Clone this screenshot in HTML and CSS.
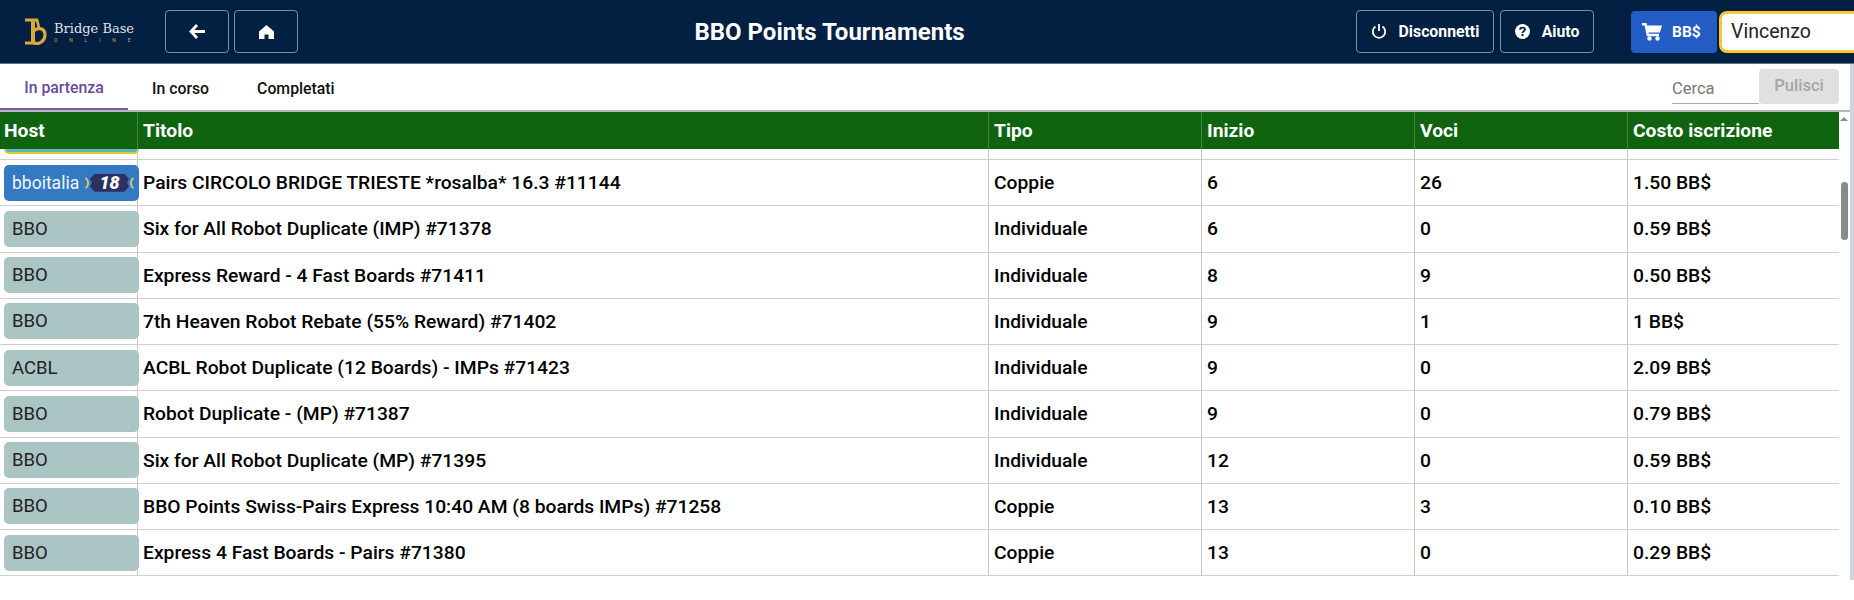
FILE: index.html
```html
<!DOCTYPE html>
<html>
<head>
    <meta charset="UTF-8">
    <title>BBO Points Tournaments</title>
    <link rel="stylesheet" href="styles.css">
</head>
<body>
    <header class="topbar">
        <div class="logo">
            <svg class="logo-mark" width="22" height="27" viewBox="0 0 22 27">
                <path d="M0 2H12L14 10M0 25H11" fill="none" stroke="#d9a93a" stroke-width="2.8"/>
                <path d="M8 2V25" fill="none" stroke="#d9a93a" stroke-width="4"/>
                <path d="M8 14C11 9 20 9 20 17C20 23 14 27 9 25" fill="none" stroke="#d9a93a" stroke-width="3.2"/>
            </svg>
            <div class="logo-text">
                <span class="logo-name">Bridge Base</span>
                <span class="logo-sub">ONLINE</span>
            </div>
        </div>
        <button class="btn btn-icon">
            <svg width="16" height="15" viewBox="0 0 16 15"><path d="M8 1L2 7.5L8 14M2.5 7.5H16" fill="none" stroke="#fff" stroke-width="2.8"/></svg>
        </button>
        <button class="btn btn-icon">
            <svg width="15" height="14" viewBox="0 0 15 14"><path d="M7.5 0L0 6.5V14H5.5V9.5H9.5V14H15V6.5Z" fill="#fff"/></svg>
        </button>
        <h1 class="title">BBO Points Tournaments</h1>
        <button class="btn btn-text btn-logout">
            <svg width="16" height="17" viewBox="0 0 16 17"><path d="M8 1V8M4.5 3.5A6.2 6.2 0 1 0 11.5 3.5" fill="none" stroke="#fff" stroke-width="1.8"/></svg>
            Disconnetti
        </button>
        <button class="btn btn-text btn-help">
            <svg width="15" height="15" viewBox="0 0 15 15"><circle cx="7.5" cy="7.5" r="7.5" fill="#fff"/><path d="M5 5.8C5 2.9 10 2.9 10 5.6C10 7.4 7.5 7.2 7.5 9" fill="none" stroke="#031f42" stroke-width="1.8"/><rect x="6.5" y="10" width="2" height="2" fill="#031f42"/></svg>
            Aiuto
        </button>
        <button class="btn-buy">
            <svg width="20" height="18" viewBox="0 0 20 18"><path d="M0 1.2H3.6L5.8 12H17" fill="none" stroke="#fff" stroke-width="2.4"/><path d="M4.5 2.5H20L18 9.5H6Z" fill="#fff"/><circle cx="7.5" cy="15.5" r="2.2" fill="#fff"/><circle cx="15.5" cy="15.5" r="2.2" fill="#fff"/></svg>
            BB$
        </button>
        <div class="user-box">Vincenzo</div>
    </header>

    <div class="main">
        <div class="content">
            <nav class="tabs">
                <a class="tab active">In partenza</a>
                <a class="tab">In corso</a>
                <a class="tab">Completati</a>
                <div class="search">
                    <span class="search-input">Cerca</span>
                    <span class="clear-btn">Pulisci</span>
                </div>
            </nav>
            <div class="table-area">
                <div class="table">
                    <div class="row head">
                        <div class="cell">Host</div>
                        <div class="cell">Titolo</div>
                        <div class="cell">Tipo</div>
                        <div class="cell">Inizio</div>
                        <div class="cell">Voci</div>
                        <div class="cell">Costo iscrizione</div>
                    </div>
                    <div class="row cut">
                        <div class="cell"><span class="host-cut"></span></div>
                        <div class="cell"></div>
                        <div class="cell"></div>
                        <div class="cell"></div>
                        <div class="cell"></div>
                        <div class="cell"></div>
                    </div>
                    <div class="row">
                        <div class="cell"><span class="host blue">bboitalia
                            <span class="badge">
                                <svg width="4" height="12" viewBox="0 0 4 12"><path d="M0.5 1C4 3 4 9 0.5 11" fill="none" stroke="#e6c766" stroke-width="1.8"/></svg>
                                <span class="badge-num">18</span>
                                <svg width="4" height="12" viewBox="0 0 4 12"><path d="M3.5 1C0 3 0 9 3.5 11" fill="none" stroke="#e6c766" stroke-width="1.8"/></svg>
                            </span>
                        </span></div>
                        <div class="cell">Pairs CIRCOLO BRIDGE TRIESTE *rosalba* 16.3 #11144</div>
                        <div class="cell">Coppie</div>
                        <div class="cell">6</div>
                        <div class="cell">26</div>
                        <div class="cell">1.50 BB$</div>
                    </div>
                    <div class="row">
                        <div class="cell"><span class="host">BBO</span></div>
                        <div class="cell">Six for All Robot Duplicate (IMP) #71378</div>
                        <div class="cell">Individuale</div>
                        <div class="cell">6</div>
                        <div class="cell">0</div>
                        <div class="cell">0.59 BB$</div>
                    </div>
                    <div class="row">
                        <div class="cell"><span class="host">BBO</span></div>
                        <div class="cell">Express Reward - 4 Fast Boards #71411</div>
                        <div class="cell">Individuale</div>
                        <div class="cell">8</div>
                        <div class="cell">9</div>
                        <div class="cell">0.50 BB$</div>
                    </div>
                    <div class="row">
                        <div class="cell"><span class="host">BBO</span></div>
                        <div class="cell">7th Heaven Robot Rebate (55% Reward) #71402</div>
                        <div class="cell">Individuale</div>
                        <div class="cell">9</div>
                        <div class="cell">1</div>
                        <div class="cell">1 BB$</div>
                    </div>
                    <div class="row">
                        <div class="cell"><span class="host">ACBL</span></div>
                        <div class="cell">ACBL Robot Duplicate (12 Boards) - IMPs #71423</div>
                        <div class="cell">Individuale</div>
                        <div class="cell">9</div>
                        <div class="cell">0</div>
                        <div class="cell">2.09 BB$</div>
                    </div>
                    <div class="row">
                        <div class="cell"><span class="host">BBO</span></div>
                        <div class="cell">Robot Duplicate - (MP) #71387</div>
                        <div class="cell">Individuale</div>
                        <div class="cell">9</div>
                        <div class="cell">0</div>
                        <div class="cell">0.79 BB$</div>
                    </div>
                    <div class="row">
                        <div class="cell"><span class="host">BBO</span></div>
                        <div class="cell">Six for All Robot Duplicate (MP) #71395</div>
                        <div class="cell">Individuale</div>
                        <div class="cell">12</div>
                        <div class="cell">0</div>
                        <div class="cell">0.59 BB$</div>
                    </div>
                    <div class="row">
                        <div class="cell"><span class="host">BBO</span></div>
                        <div class="cell">BBO Points Swiss-Pairs Express 10:40 AM (8 boards IMPs) #71258</div>
                        <div class="cell">Coppie</div>
                        <div class="cell">13</div>
                        <div class="cell">3</div>
                        <div class="cell">0.10 BB$</div>
                    </div>
                    <div class="row">
                        <div class="cell"><span class="host">BBO</span></div>
                        <div class="cell">Express 4 Fast Boards - Pairs #71380</div>
                        <div class="cell">Coppie</div>
                        <div class="cell">13</div>
                        <div class="cell">0</div>
                        <div class="cell">0.29 BB$</div>
                    </div>
                </div>
                <div class="scrollbar">
                    <span class="arrow"></span>
                    <span class="thumb"></span>
                </div>
            </div>
        </div>
    </div>
</body>
</html>
```

FILE: styles.css
```css
html, body {
    height: 100%;
}
body {
    margin: 0;
    font-family: Roboto, "Liberation Sans", sans-serif;
    background-color: white;
    color: #000;
    overflow: hidden;
}
button {
    font-family: inherit;
}

/* top bar */
.topbar {
    display: flex;
    align-items: center;
    height: 63px;
    padding: 0 0 0 25px;
    background-color: #031f42;
    border-bottom: 1px solid #5b6f88;
    white-space: nowrap;
    overflow: hidden;
}
.logo {
    display: flex;
    align-items: center;
    gap: 7px;
    width: 140px;
    flex: none;
}
.logo-text {
    display: flex;
    flex-direction: column;
    gap: 1px;
}
.logo-name {
    font-family: "DejaVu Serif", serif;
    font-size: 13px;
    color: #dfe4ea;
}
.logo-sub {
    font-size: 5px;
    letter-spacing: 11.8px;
    color: #c9a53c;
}
.btn {
    display: flex;
    align-items: center;
    justify-content: center;
    height: 43px;
    padding: 0;
    background: none;
    color: white;
    border: 1px solid #7f8da0;
    border-radius: 4px;
    font-size: 15.8px;
    font-weight: 700;
    flex: none;
}
.btn-icon {
    width: 64px;
    margin-right: 5px;
}
.title {
    flex: 1;
    margin: 0;
    text-align: center;
    color: white;
    font-size: 24px;
    font-weight: 700;
}
.btn-text {
    gap: 12px;
}
.btn-logout {
    width: 138px;
    margin-right: 6px;
}
.btn-help {
    width: 94px;
    margin-right: 37px;
}
.btn-buy {
    display: flex;
    align-items: center;
    flex: none;
    gap: 10px;
    width: 86px;
    height: 42px;
    padding: 0 0 0 11px;
    margin-right: 2px;
    background: #235cc4;
    color: white;
    border: none;
    border-radius: 4px;
    font-size: 15.5px;
    font-weight: 700;
}
.user-box {
    width: 200px;
    height: 36px;
    line-height: 36px;
    flex: none;
    padding-left: 9px;
    margin-right: -80px;
    background: white;
    border: 3px solid #f5c92f;
    border-radius: 8px;
    font-size: 19.5px;
    color: #222;
}

/* content */
.main {
    display: flex;
    height: 516px;
}
.content {
    flex: 1;
    min-width: 0;
    display: flex;
    flex-direction: column;
    border-right: 4px solid #d0d4dc;
}
.tabs {
    display: flex;
    height: 46px;
    flex: none;
    border-bottom: 2px solid #b5b9b5;
}
.tab {
    display: flex;
    align-items: center;
    justify-content: center;
    width: 128px;
    height: 46px;
    padding-top: 2px;
    box-sizing: border-box;
    font-size: 15.8px;
    font-weight: 500;
    color: #111;
}
.tab + .tab {
    width: auto;
    padding: 2px 24px 0;
}
.tab.active {
    color: #6b4a9e;
    border-bottom: 2px solid #7e57a8;
}
.search {
    display: flex;
    margin-left: auto;
    margin-right: 11px;
    padding-top: 5px;
}
.search-input {
    width: 87px;
    height: 34px;
    line-height: 40px;
    font-size: 16.5px;
    color: #777;
    border-bottom: 1px solid #aaa;
}
.clear-btn {
    width: 80px;
    height: 35px;
    line-height: 33px;
    text-align: center;
    background: #e0e0e0;
    border-radius: 4px;
    font-size: 16.5px;
    font-weight: 500;
    color: #a6a6a6;
}

/* table */
.table-area {
    display: flex;
    flex: 1;
    min-height: 0;
}
.table {
    flex: 1;
    min-width: 0;
    font-size: 19.25px;
    font-weight: 500;
}
.row {
    display: grid;
    grid-template-columns: 138px 851px 213px 213px 213px 211px;
    height: 46.25px;
    box-sizing: border-box;
    border-bottom: 1px solid #cfcfcf;
}
.row.head {
    height: 37px;
    border-bottom: none;
    background-color: #106410;
    color: white;
    font-weight: 700;
}
.row.cut {
    height: 11px;
    overflow: hidden;
}
.cell {
    display: flex;
    align-items: center;
    padding-left: 5px;
    border-right: 1px solid #c8c8c8;
    white-space: nowrap;
}
.cell:first-child {
    padding-left: 4px;
}
.cell:last-child {
    border-right: none;
}
.head .cell {
    border-right: 1px solid #3f8a3f;
}
.head .cell:last-child {
    border-right: none;
}
.host {
    display: flex;
    align-items: center;
    justify-content: space-between;
    box-sizing: border-box;
    flex: none;
    width: 135px;
    height: 36px;
    padding: 0 5px 0 8px;
    background: #abc4c4;
    border-radius: 5px;
    font-weight: 400;
    font-size: 18.5px;
    color: #222;
}
.host.blue {
    background: #347ac2;
    color: #f0f6ff;
    font-size: 17.5px;
}
.cut .cell:first-child {
    align-items: flex-start;
}
.host-cut {
    display: block;
    flex: none;
    width: 135px;
    height: 5px;
    background: #5fb3b0;
    border: solid #d9c63c;
    border-width: 0 2px 2px;
    border-radius: 0 0 5px 5px;
    box-sizing: border-box;
}
.badge {
    display: flex;
    align-items: center;
    gap: 1px;
}
.badge-num {
    display: block;
    width: 39px;
    height: 18px;
    line-height: 18px;
    text-align: center;
    background: #2c3060;
    clip-path: polygon(12% 0, 88% 0, 100% 28%, 95% 50%, 100% 72%, 88% 100%, 12% 100%, 0 72%, 5% 50%, 0 28%);
    color: white;
    font-style: italic;
    font-weight: 900;
    font-size: 18px;
}

/* scrollbar */
.scrollbar {
    position: relative;
    width: 11px;
    flex: none;
    background: white;
}
.arrow {
    position: absolute;
    top: 5px;
    left: 1px;
    width: 0;
    height: 0;
    border: 4px solid transparent;
    border-top: none;
    border-bottom: 4px solid #8a8a8a;
}
.thumb {
    position: absolute;
    top: 70px;
    left: 2px;
    width: 7px;
    height: 58px;
    background: #8a8a8a;
    border-radius: 4px;
}
```
